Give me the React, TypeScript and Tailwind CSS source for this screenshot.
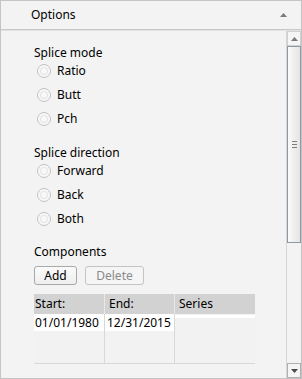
import React from "react";

const font = { fontFamily: '"Segoe UI", "Noto Sans", "Open Sans", sans-serif' };

const Radio = ({ label }: { label: string }) => (
  <div className="flex h-[24px] items-center gap-[6px] pl-[3px]">
    <span className="flex h-[14px] w-[14px] items-center justify-center rounded-full border border-[#c3c3c3] bg-[#f7f7f7]">
      <span className="h-[8px] w-[8px] rounded-full border border-[#e2e2e2] bg-[#f9f9f9]" />
    </span>
    <span className="text-[12px] text-black">{label}</span>
  </div>
);

const Arrow = ({ up }: { up?: boolean }) => (
  <svg width="7" height="4" viewBox="0 0 7 4">
    {up ? <path d="M0 4 L3.5 0 L7 4 Z" fill="#7a7a7a" /> : <path d="M0 0 L3.5 4 L7 0 Z" fill="#4a4a4a" />}
  </svg>
);

const App = () => {
  return (
    <div className="flex h-[379px] w-[302px] flex-col border border-[#c4c4c4] bg-[#f3f3f3]" style={font}>
      {/* header */}
      <div className="flex h-[29px] shrink-0 items-center justify-between border-b border-[#c8c8c8] pl-[30px] pr-[14px]">
        <span className="text-[12px] text-black">Options</span>
        <Arrow up />
      </div>
      {/* body */}
      <div className="flex min-h-0 flex-1 border-t border-[#e2e2e2]">
        <div className="flex-1 pl-[33px] pt-[14px]">
          <div className="text-[12px] leading-[16px] text-black">Splice mode</div>
          <div className="-mt-[2px]">
            <Radio label="Ratio" />
            <Radio label="Butt" />
            <Radio label="Pch" />
          </div>
          <div className="mt-[14px] text-[12px] leading-[16px] text-black">Splice direction</div>
          <div className="-mt-[2px]">
            <Radio label="Forward" />
            <Radio label="Back" />
            <Radio label="Both" />
          </div>
          <div className="mt-[13px] text-[12px] leading-[16px] text-black">Components</div>
          <div className="mt-[6px] flex gap-[8px]">
            <button className="h-[19px] w-[43px] rounded-[3px] border border-[#a8a8a8] bg-gradient-to-b from-[#fbfbfb] to-[#eeeeee] text-[12px] leading-none text-black">
              Add
            </button>
            <button className="h-[19px] w-[59px] rounded-[3px] border border-[#c4c4c4] bg-[#f5f5f5] text-[12px] leading-none text-[#8a8a8a]">
              Delete
            </button>
          </div>
          <div className="mt-[9px] grid h-[70px] w-[221px] grid-cols-[70px_70px_81px] grid-rows-[20px_1fr] border-b border-r border-[#d8d8d8] text-[12px] text-black">
            <div className="flex items-center bg-[#d2d2d2] pl-[1px]">Start:</div>
            <div className="flex items-center border-l border-[#e8e8e8] bg-[#d2d2d2] pl-[4px]">End:</div>
            <div className="flex items-center border-l border-[#e8e8e8] bg-[#d2d2d2] pl-[4px]">Series</div>
            <div className="bg-[#f2f2f2]">
              <div className="flex h-[17px] items-center bg-white pl-[1px]">01/01/1980</div>
            </div>
            <div className="border-l border-[#d8d8d8] bg-[#f2f2f2]">
              <div className="flex h-[17px] items-center bg-white pl-[2px]">12/31/2015</div>
            </div>
            <div className="border-l border-[#d8d8d8] bg-[#f2f2f2]">
              <div className="mt-[1px] h-[3px] bg-white" />
            </div>
          </div>
        </div>
        {/* scrollbar */}
        <div className="flex w-[15px] shrink-0 flex-col border-l border-[#d6d6d6] bg-[#f3f3f3]">
          <div className="flex h-[15px] items-center justify-center border border-[#d0d0d0] bg-[#f5f5f5]">
            <Arrow up />
          </div>
          <div className="flex h-[197px] items-center justify-center border border-[#8e99a6] bg-gradient-to-r from-[#fafafa] to-[#e4e4e4]">
            <div className="flex flex-col gap-[2px]">
              <span className="h-[1px] w-[5px] bg-[#7b7b7b]" />
              <span className="h-[1px] w-[5px] bg-[#7b7b7b]" />
              <span className="h-[1px] w-[5px] bg-[#7b7b7b]" />
            </div>
          </div>
          <div className="flex-1" />
          <div className="flex h-[15px] items-center justify-center border border-[#b0b0b0] bg-[#f5f5f5]">
            <Arrow />
          </div>
        </div>
      </div>
    </div>
  );
};

export default App;
